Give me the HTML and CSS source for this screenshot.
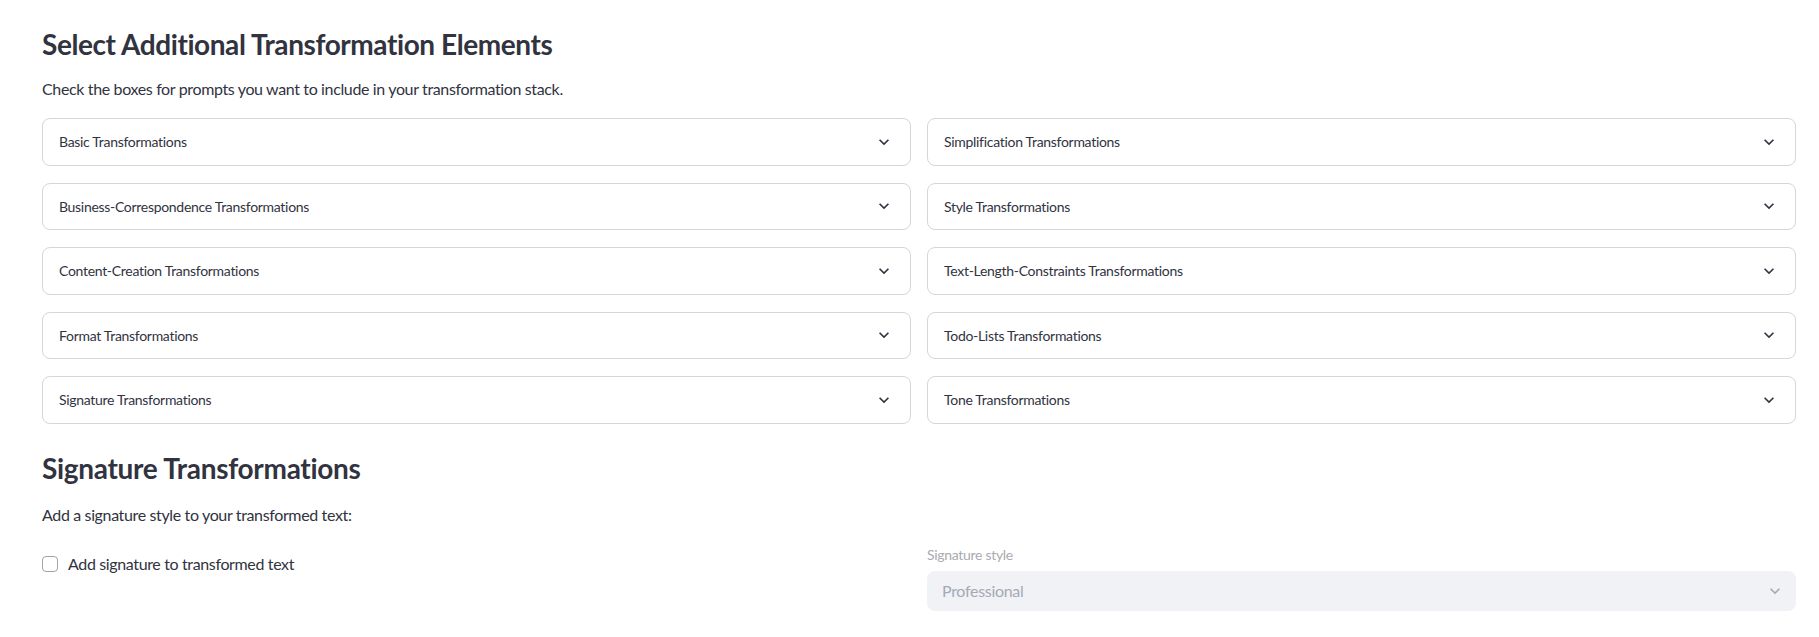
FILE: index.html
```html
<!DOCTYPE html>
<html lang="en">
<head>
<meta charset="utf-8">
<title>Transformations</title>
<link rel="stylesheet" href="styles.css">
</head>
<body>
<main class="page">
  <h3 class="title">Select Additional Transformation Elements</h3>
  <p class="lead">Check the boxes for prompts you want to include in your transformation stack.</p>

  <div class="exp-grid">
    <div class="exp"><span>Basic Transformations</span><svg class="chev" viewBox="0 0 24 24"><path d="M16.59 8.59L12 13.170 7.41 8.59 6 10l6 6 6-6z"/></svg></div>
    <div class="exp"><span>Simplification Transformations</span><svg class="chev" viewBox="0 0 24 24"><path d="M16.59 8.59L12 13.17 7.41 8.59 6 10l6 6 6-6z"/></svg></div>
    <div class="exp"><span>Business-Correspondence Transformations</span><svg class="chev" viewBox="0 0 24 24"><path d="M16.59 8.59L12 13.17 7.41 8.59 6 10l6 6 6-6z"/></svg></div>
    <div class="exp"><span>Style Transformations</span><svg class="chev" viewBox="0 0 24 24"><path d="M16.59 8.59L12 13.17 7.41 8.59 6 10l6 6 6-6z"/></svg></div>
    <div class="exp"><span>Content-Creation Transformations</span><svg class="chev" viewBox="0 0 24 24"><path d="M16.59 8.59L12 13.17 7.41 8.59 6 10l6 6 6-6z"/></svg></div>
    <div class="exp"><span>Text-Length-Constraints Transformations</span><svg class="chev" viewBox="0 0 24 24"><path d="M16.59 8.59L12 13.17 7.41 8.59 6 10l6 6 6-6z"/></svg></div>
    <div class="exp"><span>Format Transformations</span><svg class="chev" viewBox="0 0 24 24"><path d="M16.59 8.59L12 13.17 7.41 8.59 6 10l6 6 6-6z"/></svg></div>
    <div class="exp"><span>Todo-Lists Transformations</span><svg class="chev" viewBox="0 0 24 24"><path d="M16.59 8.59L12 13.17 7.41 8.59 6 10l6 6 6-6z"/></svg></div>
    <div class="exp"><span>Signature Transformations</span><svg class="chev" viewBox="0 0 24 24"><path d="M16.59 8.59L12 13.17 7.41 8.59 6 10l6 6 6-6z"/></svg></div>
    <div class="exp"><span>Tone Transformations</span><svg class="chev" viewBox="0 0 24 24"><path d="M16.59 8.59L12 13.17 7.41 8.59 6 10l6 6 6-6z"/></svg></div>
  </div>

  <h3 class="title title2">Signature Transformations</h3>
  <p class="lead lead2">Add a signature style to your transformed text:</p>

  <div class="cols">
    <div class="col col-left">
      <label class="check"><span class="box"></span><span>Add signature to transformed text</span></label>
    </div>
    <div class="col">
      <div class="sel-label">Signature style</div>
      <div class="select"><span>Professional</span><svg class="chev chev-dis" viewBox="0 0 24 24"><path d="M16.59 8.59L12 13.17 7.41 8.59 6 10l6 6 6-6z"/></svg></div>
    </div>
  </div>
</main>
</body>
</html>
```
FILE: styles.css
```css
* { box-sizing: border-box; }
html, body { margin: 0; background: #ffffff; }
body {
  font-family: "Lato", "Noto Sans", "Liberation Sans", sans-serif;
  color: #31333f;
}
.page {
  padding: 26px 23px 0 42px;
}
.title {
  margin: 0;
  font-size: 28px;
  line-height: 36px;
  font-weight: 700;
  letter-spacing: -0.42px;
}
.lead {
  margin: 15px 0 0;
  font-size: 16px;
  line-height: 24px;
  letter-spacing: -0.36px;
}
.exp-grid {
  margin-top: 17px;
  display: grid;
  grid-template-columns: 1fr 1fr;
  column-gap: 16px;
  row-gap: 17px;
}
.exp {
  height: 47.5px;
  border: 1px solid #d6d6d9;
  border-radius: 8px;
  display: flex;
  align-items: center;
  justify-content: space-between;
  padding: 0 16px 0 16px;
  font-size: 14px;
  letter-spacing: -0.3px;
}
.chev {
  width: 20px;
  height: 20px;
  fill: #31333f;
}
.title2 { margin-top: 26px; letter-spacing: -0.3px; }
.lead2 { margin-top: 17px; }
.cols {
  margin-top: 14px;
  display: grid;
  grid-template-columns: 1fr 1fr;
  column-gap: 16px;
}
.col-left { padding-top: 11px; }
.check {
  display: flex;
  align-items: center;
  gap: 10px;
  font-size: 16px;
  line-height: 24px;
  letter-spacing: -0.36px;
}
.box {
  width: 16px;
  height: 16px;
  border: 1px solid #a3a4aa;
  border-radius: 4px;
  background: #fff;
}
.sel-label {
  font-size: 14px;
  line-height: 22px;
  margin-top: 3px;
  color: #a9aab0;
  letter-spacing: -0.3px;
}
.select {
  margin-top: 5px;
  height: 40px;
  background: #f0f2f6;
  border-radius: 8px;
  display: flex;
  align-items: center;
  justify-content: space-between;
  padding: 0 11px 0 15px;
  font-size: 16px;
  color: #a6a9b4;
  letter-spacing: -0.3px;
}
.chev-dis { fill: #a6a9b4; }
```
